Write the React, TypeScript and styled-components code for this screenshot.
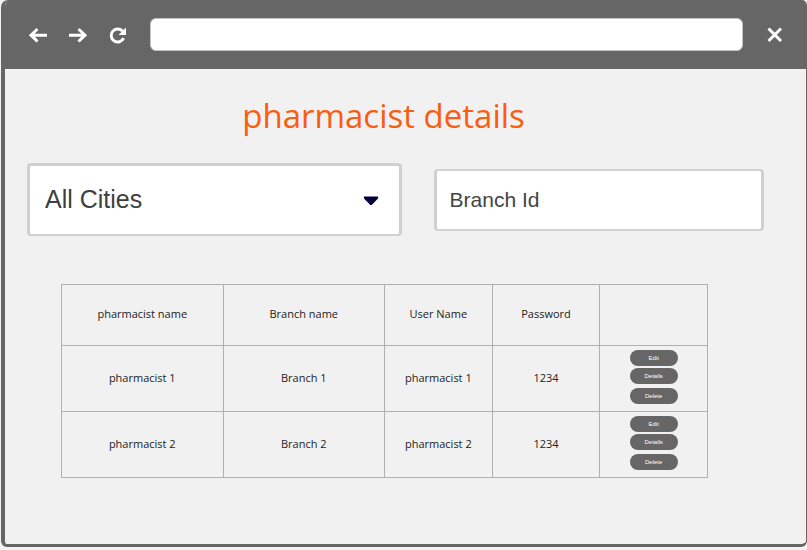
import React from "react";
import styled, { createGlobalStyle } from "styled-components";

const GlobalStyle = createGlobalStyle`
  *, *::before, *::after { box-sizing: border-box; }
  body { margin: 0; background: #f3f3f3; font-family: "Open Sans", "Noto Sans", sans-serif; }
`;

const Window = styled.div`
  display: flex;
  flex-direction: column;
  min-height: calc(100vh - 3px);
  margin: 0 0 3px 1px;
  border: solid #666;
  border-width: 0 1px 3px 4px;
  border-radius: 7px 5px 6px 6px;
  background: #f1f1f1;
  overflow: hidden;
`;

const Toolbar = styled.header`
  display: flex;
  align-items: center;
  gap: 20px;
  height: 69px;
  padding: 0 21px 0 23px;
  background: #666;
`;

const IconButton = styled.button`
  display: flex;
  width: 20px;
  height: 20px;
  padding: 0;
  border: 0;
  background: none;
  color: #fff;
`;

const Address = styled.input`
  flex: 1;
  min-width: 0;
  height: 33px;
  margin: 0 2px;
  padding: 0 12px;
  border: 1px solid #c4c4c4;
  border-radius: 6px;
  background: #fff;
  font-size: 14px;
`;

const Main = styled.main`
  flex: 1;
  padding: 23px 42px 24px 22px;
`;

const Title = styled.h1`
  margin: 0 0 23px;
  padding-right: 24px;
  color: #f95d0f;
  font-size: 33px;
  font-weight: 400;
  line-height: 48px;
  text-align: center;
`;

const Filters = styled.form`
  display: flex;
  align-items: center;
  gap: 32px;
`;

const Field = styled.div<{ $share: number }>`
  position: relative;
  flex: ${({ $share }) => $share} 1 0;
  min-width: 0;
`;

const CitySelect = styled.select`
  display: block;
  width: 100%;
  height: 73px;
  padding: 0 48px 2px 15px;
  border: 3px solid #d0d0d0;
  border-bottom-width: 2px;
  border-radius: 4px;
  appearance: none;
  background: #fff;
  color: #404040;
  font: 25px "Liberation Sans", Arial, sans-serif;
`;

const Caret = styled.svg`
  position: absolute;
  top: 33px;
  right: 23px;
  pointer-events: none;
`;

const BranchInput = styled.input`
  display: block;
  width: 100%;
  height: 62px;
  padding: 0 13px;
  border: 2px solid #d0d0d0;
  border-right-width: 3px;
  border-left-width: 3px;
  border-radius: 4px;
  background: #fff;
  color: #444;
  font: 21px "Liberation Sans", Arial, sans-serif;

  &::placeholder { color: #444; opacity: 1; }
`;

const TableArea = styled.div`
  margin: 48px 56px 0 34px;
`;

const Table = styled.table`
  width: 100%;
  border-collapse: collapse;
  table-layout: fixed;
  color: #222;
  font-size: 11px;
  line-height: 16px;
  text-align: center;
`;

const Column = styled.col<{ $wide?: boolean }>`
  width: ${({ $wide }) => ($wide ? "25%" : "auto")};
`;

const HeadRow = styled.tr`
  height: 61px;
`;

const Row = styled.tr`
  height: 66px;
`;

const HeadCell = styled.th`
  padding: 0 4px 2px;
  border: 1px solid #b0b0b0;
  font-weight: 400;
`;

const Cell = styled.td`
  padding: 0 4px 2px;
  border: 1px solid #b0b0b0;
`;

const ActionCell = styled(Cell)`
  padding: 4px 0 0;
  vertical-align: top;
`;

const Actions = styled.div`
  display: flex;
  flex-direction: column;
  align-items: center;
  gap: 2px;
`;

const Action = styled.button<{ $spaced?: boolean }>`
  width: 48px;
  height: 16px;
  margin-top: ${({ $spaced }) => ($spaced ? "2px" : "0")};
  padding: 0;
  border: 0;
  border-radius: 8px;
  background: #666;
  color: #fff;
  font: 6px/16px "Liberation Sans", Arial, sans-serif;
`;

const pharmacists = [
  { name: "pharmacist 1", branch: "Branch 1", user: "pharmacist 1", password: "1234" },
  { name: "pharmacist 2", branch: "Branch 2", user: "pharmacist 2", password: "1234" },
];

const Glyph = ({ children }: { children: React.ReactNode }) => (
  <svg width="20" height="20" viewBox="0 0 20 20" fill="none" stroke="currentColor" strokeWidth="3" aria-hidden="true">
    {children}
  </svg>
);

export default function App() {
  return (
    <>
      <GlobalStyle />
      <Window>
        <Toolbar>
          <IconButton type="button" aria-label="Back">
            <Glyph>
              <path d="M19 10.2H3M9.5 4L3 10.2L9.5 16.5" />
            </Glyph>
          </IconButton>
          <IconButton type="button" aria-label="Forward">
            <Glyph>
              <path d="M1 10.2H17M10.5 4L17 10.2L10.5 16.5" />
            </Glyph>
          </IconButton>
          <IconButton type="button" aria-label="Reload">
            <Glyph>
              <path d="M15.6 13.2A6.5 6.5 0 1 1 14.4 6" />
              <path d="M18 2.5V10H10.5Z" fill="currentColor" stroke="none" />
            </Glyph>
          </IconButton>
          <Address type="text" aria-label="Address" />
          <IconButton type="button" aria-label="Close">
            <Glyph>
              <path d="M3.5 3.5L16 16M16 3.5L3.5 16" />
            </Glyph>
          </IconButton>
        </Toolbar>
        <Main>
          <Title>pharmacist details</Title>
          <Filters>
            <Field $share={374}>
              <CitySelect aria-label="City">
                <option>All Cities</option>
              </CitySelect>
              <Caret width="16" height="10" viewBox="0 0 16 10" aria-hidden="true">
                <path d="M1.2 0.5H14.8Q15.8 1.5 14.8 2.8L9.2 8.6Q8 9.6 6.8 8.6L1.2 2.8Q0.2 1.5 1.2 0.5Z" fill="#04003a" />
              </Caret>
            </Field>
            <Field $share={330}>
              <BranchInput type="text" aria-label="Branch Id" placeholder="Branch Id" />
            </Field>
          </Filters>
          <TableArea>
            <Table>
              <colgroup>
                <Column $wide />
                <Column $wide />
                <Column />
                <Column />
                <Column />
              </colgroup>
              <thead>
                <HeadRow>
                  <HeadCell scope="col">pharmacist name</HeadCell>
                  <HeadCell scope="col">Branch name</HeadCell>
                  <HeadCell scope="col">User Name</HeadCell>
                  <HeadCell scope="col">Password</HeadCell>
                  <HeadCell scope="col" aria-label="Actions" />
                </HeadRow>
              </thead>
              <tbody>
                {pharmacists.map((p) => (
                  <Row key={p.name}>
                    <Cell>{p.name}</Cell>
                    <Cell>{p.branch}</Cell>
                    <Cell>{p.user}</Cell>
                    <Cell>{p.password}</Cell>
                    <ActionCell>
                      <Actions>
                        <Action type="button">Edit</Action>
                        <Action type="button">Details</Action>
                        <Action type="button" $spaced>Delete</Action>
                      </Actions>
                    </ActionCell>
                  </Row>
                ))}
              </tbody>
            </Table>
          </TableArea>
        </Main>
      </Window>
    </>
  );
}
